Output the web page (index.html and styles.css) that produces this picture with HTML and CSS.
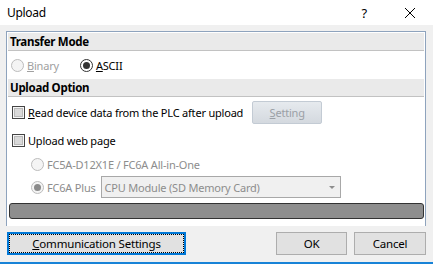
FILE: index.html
```html
<!DOCTYPE html>
<html>
<head>
<meta charset="utf-8">
<link rel="stylesheet" href="styles.css">
</head>
<body>
<div class="window">
  <div class="titlebar">
    <span class="title">Upload</span>
    <span class="help">?</span>
    <svg class="close" width="12" height="12" viewBox="0 0 12 12"><path d="M1 1 L11 11 M11 1 L1 11" stroke="#000" stroke-width="1" fill="none"/></svg>
  </div>
  <div class="body">
    <div class="panel">
      <div class="head">Transfer Mode</div>
      <div class="row mode">
        <label class="opt disabled"><span class="radio off"></span><span><u>B</u>inary</span></label>
        <label class="opt"><span class="radio on"></span><span><u>A</u>SCII</span></label>
      </div>
      <div class="head">Upload Option</div>
      <div class="row read">
        <label class="opt"><span class="check"></span><span><u>R</u>ead device data from the PLC after upload</span></label>
        <span class="setting"><u>S</u>etting</span>
      </div>
      <div class="row web">
        <label class="opt"><span class="check"></span><span>Upload web page</span></label>
      </div>
      <div class="row sub">
        <label class="opt disabled"><span class="radio off"></span><span>FC5A-D12X1E / FC6A All-in-One</span></label>
      </div>
      <div class="row sub plus">
        <label class="opt disabled"><span class="radio dis-on"></span><span>FC6A Plus</span></label>
        <span class="combo"><span>CPU Module (SD Memory Card)</span><span class="arrow"></span></span>
      </div>
      <div class="progress"></div>
    </div>
    <div class="buttons">
      <span class="btn focus"><u>C</u>ommunication Settings</span>
      <span class="spacer"></span>
      <span class="btn ok">OK</span>
      <span class="btn cancel">Cancel</span>
    </div>
  </div>
</div>
</body>
</html>
```
FILE: styles.css
```css
* { box-sizing: border-box; }
html, body { margin: 0; padding: 0; }
body {
  font-family: "Noto Sans", "Open Sans", sans-serif;
  font-size: 11px;
  letter-spacing: -0.2px;
  color: #000;
  width: 433px;
  height: 264px;
  overflow: hidden;
}
.window {
  width: 433px;
  height: 264px;
  background: #f0f0f0;
  border-bottom: 2px solid #1883d7;
  display: flex;
  flex-direction: column;
}
.titlebar {
  height: 25px;
  background: #fff;
  display: flex;
  align-items: center;
  padding-left: 7px;
}
.title { font-size: 12px; letter-spacing: -0.3px; flex: 1; }
.help { font-size: 13px; margin-right: 37px; }
.close { margin-right: 17px; }
.body {
  flex: 1;
  padding: 6px 7px 0 6px;
  display: flex;
  flex-direction: column;
}
.panel {
  height: 195px;
  background: #fff;
  border: 1px solid #8ea3bd;
  border-bottom: none;
  padding: 1px 1px 0 1px;
  display: flex;
  flex-direction: column;
}
.head {
  height: 18px;
  background: #eaeaea;
  border-bottom: 1px solid #c2c2c2;
  font-weight: bold;
  font-size: 11.5px;
  padding-left: 2px;
  line-height: 17px;
  letter-spacing: -0.3px;
}
.row { display: flex; align-items: center; }
.mode { height: 28px; padding-left: 3px; gap: 21px; }
.read { height: 31px; padding-left: 4px; }
.web { height: 24px; padding-left: 4px; }
.sub { height: 24px; padding-left: 23px; }
.plus { height: 22px; }
.opt { display: flex; align-items: center; gap: 3px; }
.read .opt, .web .opt { gap: 2px; }
.disabled { color: #a0a0a0; }
.sub .disabled { color: #8d8d8d; }
.radio {
  width: 13px; height: 13px; border-radius: 50%;
  border: 1px solid #333; background: #fff;
  display: inline-flex; align-items: center; justify-content: center;
}
.radio.off { border-color: #bcbcbc; background: #f4f4f4; }
.radio.on::after { content: ""; width: 7px; height: 7px; border-radius: 50%; background: #333; }
.radio.dis-on { border-color: #bcbcbc; background: #f4f4f4; }
.radio.dis-on::after { content: ""; width: 7px; height: 7px; border-radius: 50%; background: #8a8a8a; }
.check {
  width: 13px; height: 13px;
  border: 1px solid #444;
  background: #d9d9d9;
  box-shadow: inset 0 0 0 1px #f6f6f6, inset 0 0 0 2px #b9b9b9;
  margin-right: 1px;
}
.setting {
  margin-left: 9px;
  width: 70px; height: 23px;
  border: 1px solid #c3cbd4;
  border-radius: 2px;
  background: linear-gradient(#e6eaee, #d4d9df);
  color: #9ba0a6;
  display: flex; align-items: center; justify-content: center;
}
.combo {
  margin-left: 5px;
  width: 240px; height: 22px;
  border: 1px solid #a8a8a8;
  background: #f0f0f0;
  color: #8d8d8d;
  display: flex; align-items: center; justify-content: space-between;
  padding: 0 5px 0 3px;
}
.arrow {
  width: 0; height: 0;
  border-left: 3px solid transparent;
  border-right: 3px solid transparent;
  border-top: 3px solid #8d8d8d;
}
.progress {
  margin: 5px 0 0 1px;
  width: 415px;
  height: 16px;
  border: 1px solid #333;
  border-radius: 3px;
  background: #8e8e8e;
}
.buttons {
  margin-top: 6px;
  display: flex;
  gap: 7px;
  padding-left: 1px;
  font-size: 11.5px;
}
.spacer { flex: 1; }
.btn {
  height: 23px;
  border: 1px solid #adadad;
  background: #e1e1e1;
  display: flex; align-items: center; justify-content: center;
}
.btn.focus {
  width: 179px;
  border: 2px solid #0078d7;
  outline: 1px dotted #000;
  outline-offset: -3px;
}
.btn.ok { width: 71px; }
.btn.cancel { width: 72px; }
```
